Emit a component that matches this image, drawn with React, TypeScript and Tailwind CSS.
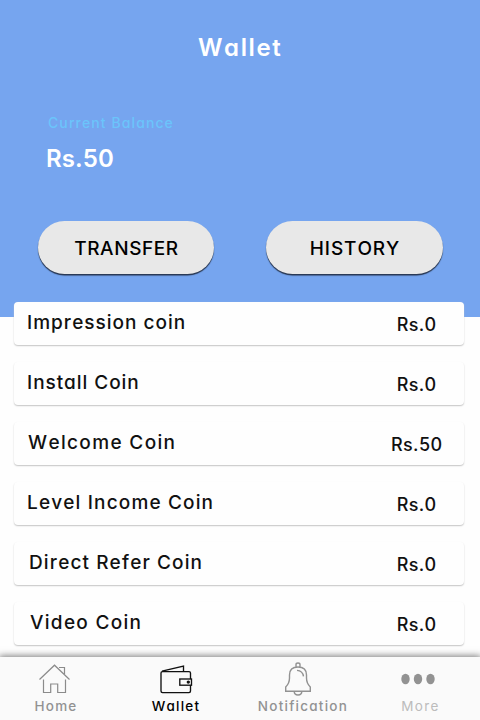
const coins = [
  { name: "Impression coin", value: "Rs.0", label: "ml-[13px] tracking-[1px]", amount: "mr-[27.5px] tracking-[0.3px]" },
  { name: "Install Coin", value: "Rs.0", label: "ml-[13px] tracking-[0.95px]", amount: "mr-[27.5px] tracking-[0.3px]" },
  { name: "Welcome Coin", value: "Rs.50", label: "ml-[14px] tracking-[1.35px]", amount: "mr-[21.5px] tracking-[0.4px]" },
  { name: "Level Income Coin", value: "Rs.0", label: "ml-[13px] tracking-[1.15px]", amount: "mr-[27.5px] tracking-[0.3px]" },
  { name: "Direct Refer Coin", value: "Rs.0", label: "ml-[15px] tracking-[1.1px]", amount: "mr-[27.5px] tracking-[0.3px]" },
  { name: "Video Coin", value: "Rs.0", label: "ml-[16px] tracking-[1.3px]", amount: "mr-[27.5px] tracking-[0.3px]" },
];

function HomeIcon() {
  return (
    <svg width="32" height="32" viewBox="0 0 32 32" fill="none" stroke="#8b8b8b" strokeWidth="1.2">
      <path d="M.5 16.500 15.500 2.200l15 14.300M4.500 16.500V29.500h7.200V21h7v8.500H26.500V16.500M20 4.500h5.500v6.500" />
    </svg>
  );
}

function WalletIcon() {
  return (
    <svg width="34" height="32" viewBox="0 0 34 32" fill="none" stroke="#111" strokeWidth="1.35">
      <path d="M3.500 8.600h26.500q1.500 0 1.500 1.500v18q0 1.500-1.500 1.500h-26.500Q2 29.600 2 28.100V10.100q0-1.500 1.500-1.500Z" />
      <path d="M3 8.200 24.500 3.200v5.400" />
      <rect x="20.800" y="16" width="11.700" height="6.200" fill="#fafafa" />
      <circle cx="29.300" cy="19.100" r="1" fill="#111" />
    </svg>
  );
}

function BellIcon() {
  return (
    <svg className="mr-[10px]" width="30" height="36" viewBox="0 0 30 36" fill="none" stroke="#929292" strokeWidth="1.4">
      <path d="M13 6V3.500q0-1.500 2-1.500T17 3.500V6M2.700 30.300v-4.300c3-3 3.800-5.300 3.800-9V14C6.500 8.500 9.500 6 15 6s8.500 2.500 8.500 8v3c0 3.700.8 6 3.800 9v4.300Z" />
      <path d="M11.200 30.300c0 5 7.600 5 7.600 0M14 9.400c4 .3 6 2.300 6.500 6" />
    </svg>
  );
}

function MoreIcon() {
  return (
    <svg className="mr-[2px]" width="34" height="12" viewBox="0 0 34 12" fill="#929292">
      <ellipse cx="4.500" cy="6" rx="4.200" ry="5.300" />
      <ellipse cx="17" cy="6" rx="4.200" ry="5.300" />
      <ellipse cx="29.500" cy="6" rx="4.200" ry="5.300" />
    </svg>
  );
}

export default function App() {
  return (
    <div className="flex h-[720px] w-[480px] flex-col overflow-hidden bg-[#fefefe] font-['Inter',sans-serif] font-medium whitespace-nowrap [font-feature-settings:'cv11'] [font-kerning:none]">
      <header className="h-[317px] shrink-0 bg-[#76a5ef] pt-[33px]">
        <h1 className="pl-[198px] text-[24px] leading-[30px] font-semibold tracking-[1.6px] text-white">Wallet</h1>
        <p className="mt-[50px] pl-[48px] text-[14px] leading-[20px] tracking-[1.1px] text-[#6bc4fb]">Current Balance</p>
        <p className="mt-[11px] pl-[46px] text-[24px] leading-[30px] font-semibold tracking-[0.1px] text-white">Rs.50</p>
        <div className="mt-[47px] flex justify-between pr-[37px] pl-[38px]">
          <button className="h-[53px] w-[176px] rounded-full bg-[#e8e8e8] pt-[3px] pl-px text-[19px] font-medium tracking-[0.6px] text-black shadow-[0_1.5px_1px_#26344e]">TRANSFER</button>
          <button className="h-[53px] w-[177px] rounded-full bg-[#e8e8e8] pt-[3px] pl-px text-[19px] font-medium tracking-[0.9px] text-black shadow-[0_1.5px_1px_#26344e]">HISTORY</button>
        </div>
      </header>
      <main className="z-10 mx-[14px] -mt-[15px] flex h-[355px] w-[450px] shrink-0 flex-col gap-[17px]">
        {coins.map((coin) => (
          <div key={coin.name} className="flex h-[43px] shrink-0 justify-between rounded-[4px] bg-[#fefefe] text-[19px] text-[#111] shadow-[0_1px_1.5px_#c4c4c4]">
            <span className={`${coin.label} mt-[9px] leading-[24px]`}>{coin.name}</span>
            <span className={`${coin.amount} mt-[11px] text-[18px] leading-[24px]`}>{coin.value}</span>
          </div>
        ))}
      </main>
      <nav className="z-20 flex h-[63px] shrink-0 bg-[#fafafa] text-[13.5px] leading-[16px] text-[#929292] shadow-[0_0_7px_1px_#777]">
        <div className="flex w-[110px] flex-col items-center pt-[6px]">
          <HomeIcon />
          <span className="mt-[3px] pl-[2px] tracking-[1.2px]">Home</span>
        </div>
        <div className="flex w-[131px] flex-col items-center pt-[6px] text-black">
          <WalletIcon />
          <span className="mt-[3px] pl-px tracking-[1.2px]">Wallet</span>
        </div>
        <div className="flex w-[123px] flex-col items-center pt-[4px]">
          <BellIcon />
          <span className="mt-px pl-px tracking-[1.25px]">Notification</span>
        </div>
        <div className="flex w-[110px] flex-col items-center pt-[16px]">
          <MoreIcon />
          <span className="mt-[13px] pl-[3px] font-normal tracking-[1.3px] text-[#bcbcbc]">More</span>
        </div>
      </nav>
    </div>
  );
}
